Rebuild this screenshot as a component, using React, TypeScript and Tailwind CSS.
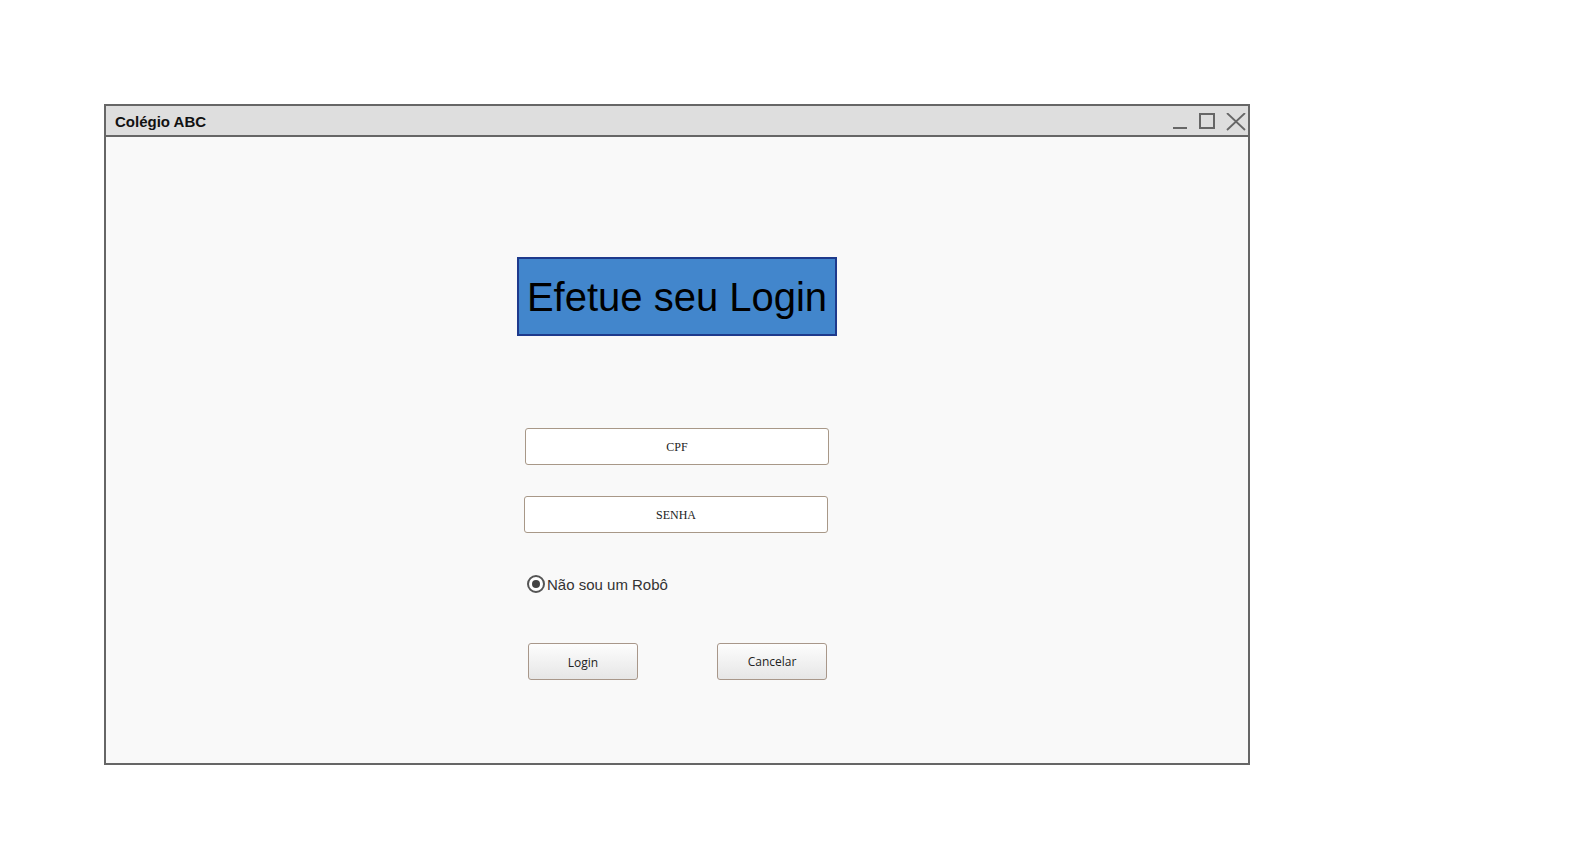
export default function App() {
  return (
    <div className="min-h-[857px] w-full bg-white pt-[104px] pl-[104px] font-['Liberation_Sans',Arial,sans-serif]">
      <div className="w-[1146px] h-[661px] border-2 border-[#666666] bg-[#f9f9f9] flex flex-col">
        {/* title bar */}
        <div className="h-[31px] shrink-0 bg-[#dedede] border-b-2 border-[#666666] flex items-center justify-between pl-[9px] pr-[2px] pt-[2px]">
          <span className="text-[15px] font-bold text-[#111] leading-none">Colégio ABC</span>
          <div className="flex items-center gap-[10px]">
            <svg width="16" height="18" viewBox="0 0 16 18">
              <line x1="1" y1="15" x2="15" y2="15" stroke="#666" strokeWidth="2" />
            </svg>
            <svg width="18" height="18" viewBox="0 0 18 18">
              <rect x="2" y="1" width="14" height="14" fill="none" stroke="#666" strokeWidth="2" />
            </svg>
            <svg width="20" height="18" viewBox="0 0 20 18">
              <path d="M1 0 L19 17 M19 0 L1 17" stroke="#666" strokeWidth="1.8" fill="none" />
            </svg>
          </div>
        </div>

        {/* content */}
        <div className="flex-1 pt-[120px] pl-[411px] flex flex-col items-start">
          <div className="w-[320px] h-[79px] border-2 border-[#1e3a8c] bg-[#4286cc] flex items-center justify-center">
            <span className="text-[40px] leading-none text-black">Efetue seu Login</span>
          </div>

          <div className="mt-[92px] ml-[8px] w-[304px] h-[37px] bg-white border border-[#a89888] rounded-[3px] flex items-center justify-center">
            <span className="font-['Liberation_Serif','Times_New_Roman',serif] text-[12px] text-[#222]">CPF</span>
          </div>

          <div className="mt-[31px] ml-[7px] w-[304px] h-[37px] bg-white border border-[#a89888] rounded-[3px] flex items-center justify-center">
            <span className="font-['Liberation_Serif','Times_New_Roman',serif] text-[12px] text-[#222]">SENHA</span>
          </div>

          <div className="mt-[41px] ml-[10px] h-[20px] flex items-center gap-[2px]">
            <span className="w-[18px] h-[18px] rounded-full border-2 border-[#555] flex items-center justify-center bg-white">
              <span className="w-[8px] h-[8px] rounded-full bg-[#444]" />
            </span>
            <span className="text-[15px] text-[#333] leading-none">Não sou um Robô</span>
          </div>

          <div className="mt-[49px] ml-[11px] flex items-start gap-[79px]">
            <button className="w-[110px] h-[37px] border border-[#a8978a] rounded-[3px] bg-gradient-to-b from-[#fdfdfd] to-[#e6e6e6] pt-[2px] flex items-center justify-center font-['Open_Sans',sans-serif] text-[12px] text-[#222]">
              Login
            </button>
            <button className="w-[110px] h-[37px] border border-[#a8978a] rounded-[3px] bg-gradient-to-b from-[#fdfdfd] to-[#e6e6e6] flex items-center justify-center font-['Open_Sans',sans-serif] text-[12px] text-[#222]">
              Cancelar
            </button>
          </div>
        </div>
      </div>
    </div>
  );
}
